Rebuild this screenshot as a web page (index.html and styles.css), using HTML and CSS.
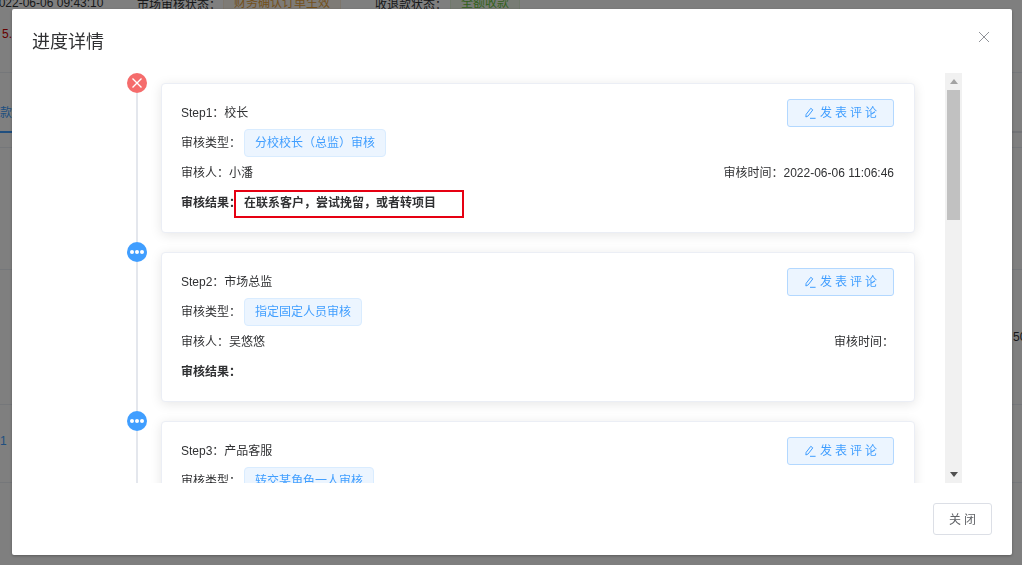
FILE: index.html
```html
<!DOCTYPE html>
<html lang="zh-CN">
<head>
<meta charset="utf-8">
<title>进度详情</title>
<link rel="stylesheet" href="styles.css">
</head>
<body>
<div class="page">
  <div class="summary">
    <div class="summary-row">
      <span class="date">2022-06-06 09:43:10</span>
      <span class="label-market">市场审核状态&#xFF1A;</span>
      <span class="bg-tag bg-tag-orange">财务确认订单生效</span>
      <span class="label-refund">收退款状态&#xFF1A;</span>
      <span class="bg-tag bg-tag-green">全额收款</span>
    </div>
    <div class="amount">5.</div>
  </div>
  <div class="tabs"><span class="tab">款</span></div>
  <div class="bg-row bg-row-a"></div>
  <div class="bg-row bg-row-b"></div>
  <div class="bg-row bg-row-c"><span class="edge-num">50</span></div>
  <div class="bg-row bg-row-d"><span class="link-num">1</span></div>
</div>
<div class="mask"></div>
<div class="dialog">
  <header class="dialog-header">
    <h2 class="dialog-title">进度详情</h2>
    <svg class="dialog-close" width="12" height="12" viewBox="0 0 12 12"><path d="M1 1l10 10M11 1L1 11" stroke="#909399" stroke-width="1" fill="none"/></svg>
  </header>
  <div class="scroll-wrap">
    <div class="viewport">
      <section class="step">
        <div class="rail">
          <span class="dot dot-error"><svg width="12" height="12" viewBox="0 0 12 12"><path d="M1.5 1.5l9 9M10.5 1.5l-9 9" stroke="#fff" stroke-width="1.4" fill="none"/></svg></span>
          <span class="rail-line"></span>
        </div>
        <article class="card">
          <div class="row row-between">
            <span>Step1&#xFF1A;校长</span>
            <button class="comment-btn"><svg width="12" height="12" viewBox="0 0 12 12"><path d="M6.8 1.3l2 1.6-4.6 6L1.9 10l.2-2.6zM6 11.3h5.6" stroke="#409eff" stroke-width="1" fill="none"/></svg><span class="comment-text">发表评论</span></button>
          </div>
          <div class="row"><span class="field">审核类型&#xFF1A;</span><span class="tag">分校校长&#xFF08;总监&#xFF09;审核</span></div>
          <div class="row row-between"><span>审核人&#xFF1A;小潘</span><span>审核时间&#xFF1A;2022-06-06 11:06:46</span></div>
          <div class="row result"><span class="field">审核结果&#xFF1A;</span><span class="result-value marked">在联系客户&#xFF0C;尝试挽留&#xFF0C;或者转项目</span></div>
        </article>
      </section>
      <section class="step">
        <div class="rail">
          <span class="dot dot-pending"><i></i><i></i><i></i></span>
          <span class="rail-line"></span>
        </div>
        <article class="card">
          <div class="row row-between">
            <span>Step2&#xFF1A;市场总监</span>
            <button class="comment-btn"><svg width="12" height="12" viewBox="0 0 12 12"><path d="M6.8 1.3l2 1.6-4.6 6L1.9 10l.2-2.6zM6 11.3h5.6" stroke="#409eff" stroke-width="1" fill="none"/></svg><span class="comment-text">发表评论</span></button>
          </div>
          <div class="row"><span class="field">审核类型&#xFF1A;</span><span class="tag">指定固定人员审核</span></div>
          <div class="row row-between"><span>审核人&#xFF1A;吴悠悠</span><span class="time-empty">审核时间&#xFF1A;</span></div>
          <div class="row result"><span class="field">审核结果&#xFF1A;</span></div>
        </article>
      </section>
      <section class="step">
        <div class="rail">
          <span class="dot dot-pending"><i></i><i></i><i></i></span>
          <span class="rail-line"></span>
        </div>
        <article class="card">
          <div class="row row-between">
            <span>Step3&#xFF1A;产品客服</span>
            <button class="comment-btn"><svg width="12" height="12" viewBox="0 0 12 12"><path d="M6.8 1.3l2 1.6-4.6 6L1.9 10l.2-2.6zM6 11.3h5.6" stroke="#409eff" stroke-width="1" fill="none"/></svg><span class="comment-text">发表评论</span></button>
          </div>
          <div class="row"><span class="field">审核类型&#xFF1A;</span><span class="tag">转交某角色一人审核</span></div>
        </article>
      </section>
    </div>
    <div class="scrollbar">
      <span class="arrow arrow-up"></span>
      <div class="track"><span class="thumb"></span></div>
      <span class="arrow arrow-down"></span>
    </div>
  </div>
  <footer class="dialog-footer"><button class="close-btn">关闭</button></footer>
</div>
</body>
</html>
```
FILE: styles.css
```css
* { box-sizing: border-box; }
html, body { margin: 0; padding: 0; height: 100%; overflow: hidden; }
body {
  font-family: "Liberation Sans", "Noto Sans CJK SC", sans-serif;
  font-size: 12px;
  color: #303133;
  background: #fff;
}
.page { height: 565px; overflow: hidden; }
.summary {
  margin-top: -6px;
  height: 79px;
  border-bottom: 1px solid #ebeef5;
}
.summary-row { display: flex; align-items: center; height: 18px; white-space: nowrap; }
.date { margin-left: -8px; width: 145px; flex: none; }
.label-market { width: 86px; flex: none; }
.bg-tag { flex: none; height: 28px; line-height: 26px; padding: 0 10px; border: 1px solid; border-radius: 3px; }
.bg-tag-orange { width: 118px; background: #fdf6ec; border-color: #faecd8; color: #e6a23c; }
.bg-tag-green { width: 70px; background: #f0f9eb; border-color: #e1f3d8; color: #67c23a; }
.label-refund { margin-left: 34px; width: 75px; flex: none; }
.amount { margin: 15px 0 0 2px; line-height: 14px; color: #c00; font-size: 12px; }
.tabs { height: 60px; border-bottom: 2px solid #e4e7ed; display: flex; }
.tab { width: 12px; height: 60px; line-height: 80px; color: #409eff; border-bottom: 2px solid #409eff; overflow: hidden; font-size: 12px; }
.bg-row { border-bottom: 1px solid #ebeef5; display: flex; align-items: center; }
.bg-row-a { height: 15px; }
.bg-row-b { height: 122px; }
.bg-row-c { height: 135px; justify-content: flex-end; }
.bg-row-d { height: 78px; padding-bottom: 6px; }
.edge-num { width: 9px; overflow: hidden; white-space: nowrap; }
.link-num { color: #409eff; }

.mask { position: fixed; inset: 0; background: rgba(0, 0, 0, .5); }
.dialog {
  position: fixed;
  left: 12px;
  top: 9px;
  width: 1000px;
  height: 546px;
  background: #fff;
  border-radius: 2px;
  box-shadow: 0 1px 3px rgba(0, 0, 0, .3);
  display: flex;
  flex-direction: column;
}
.dialog-header {
  height: 64px;
  flex: none;
  padding: 21px 20px 0;
  position: relative;
}
.dialog-title { margin: 0; font-size: 18px; font-weight: 400; line-height: 24px; color: #303133; }
.dialog-close { position: absolute; left: 966px; top: 22px; }

.scroll-wrap { height: 410px; flex: none; margin: 0 50px; display: flex; }
.viewport { flex: 1; min-width: 0; overflow: hidden; padding: 0 30px 0 65px; }
.scrollbar { width: 17px; flex: none; background: #f1f1f1; display: flex; flex-direction: column; }
.arrow { height: 17px; flex: none; display: flex; align-items: center; justify-content: center; }
.arrow::before { content: ""; width: 0; height: 0; border-left: 4.5px solid transparent; border-right: 4.5px solid transparent; }
.arrow-up::before { border-bottom: 5px solid #a3a3a3; }
.arrow-down::before { border-top: 5px solid #505050; }
.track { flex: 1; padding: 0 2px; }
.thumb { display: block; height: 130px; background: #c1c1c1; }

.step { display: flex; gap: 14px; }
.rail { width: 20px; flex: none; display: flex; flex-direction: column; align-items: center; }
.rail-line { flex: 1; width: 2px; background: #e4e7ed; }
.dot {
  width: 20px;
  height: 20px;
  border-radius: 50%;
  flex: none;
  display: flex;
  align-items: center;
  justify-content: center;
  gap: 1px;
}
.dot i { width: 4px; height: 4px; border-radius: 50%; background: #fff; }
.dot-error { background: #f56c6c; }
.dot-pending { background: #409eff; }
.card {
  flex: 1;
  min-width: 0;
  height: 150px;
  margin: 10px 0 9px;
  padding: 14px 20px 14px 19px;
  background: #fff;
  border: 1px solid #ebeef5;
  border-radius: 4px;
  box-shadow: 0 2px 12px 0 rgba(0, 0, 0, .1);
}
.row { height: 30px; display: flex; align-items: center; line-height: 16px; }
.row-between { justify-content: space-between; }
.field { width: 63px; flex: none; }
.tag {
  height: 28px;
  line-height: 27px;
  padding: 0 10px;
  background: #ecf5ff;
  border: 1px solid #d9ecff;
  border-radius: 4px;
  color: #409eff;
}
.comment-btn {
  width: 107px;
  height: 28px;
  padding: 0 0 0 16px;
  display: flex;
  align-items: center;
  gap: 4px;
  font: inherit;
  line-height: 16px;
  color: #409eff;
  background: #ecf5ff;
  border: 1px solid #b3d8ff;
  border-radius: 3px;
}
.comment-text { letter-spacing: 3px; }
.result { font-weight: 700; }
.result-value { position: relative; }
.marked::after {
  content: "";
  box-sizing: border-box;
  position: absolute;
  left: -10px;
  top: -5px;
  width: 230px;
  height: 28px;
  border: 2px solid #e60012;
}
.dialog-footer { height: 72px; flex: none; padding: 20px; display: flex; justify-content: flex-end; }
.close-btn {
  width: 59px;
  height: 32px;
  padding: 0 0 1px 3px;
  font: inherit;
  letter-spacing: 3px;
  color: #606266;
  background: #fff;
  border: 1px solid #dcdfe6;
  border-radius: 3px;
}
```
